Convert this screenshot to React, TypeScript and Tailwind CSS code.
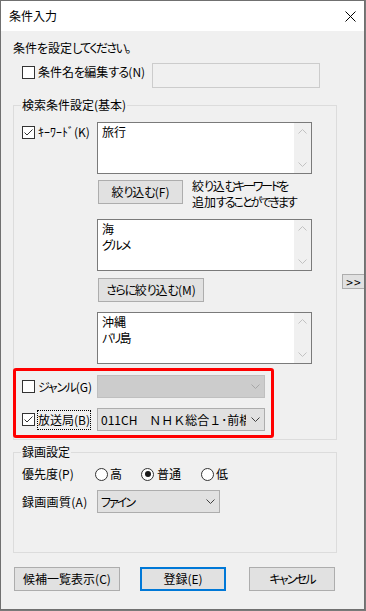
import React from "react";

const Tick = () => (
  <svg width="11" height="11" viewBox="0 0 11 11" className="block">
    <polyline points="1.5,5.5 4,8 9.5,2.5" fill="none" stroke="#333333" strokeWidth="1" />
  </svg>
);

function Checkbox({ checked }: { checked?: boolean }) {
  return (
    <span className="w-[13px] h-[13px] shrink-0 border border-[#333333] bg-white flex items-center justify-center">
      {checked ? <Tick /> : null}
    </span>
  );
}

function Radio({ checked }: { checked?: boolean }) {
  return (
    <span className="w-[13px] h-[13px] shrink-0 rounded-full border border-[#333333] bg-white flex items-center justify-center">
      {checked ? <span className="w-[6px] h-[6px] rounded-full bg-[#1a1a1a]" /> : null}
    </span>
  );
}

const ChevronDown = ({ color }: { color: string }) => (
  <svg width="9" height="5" viewBox="0 0 9 5" className="block">
    <polyline points="0.5,0.5 4.5,4.5 8.5,0.5" fill="none" stroke={color} strokeWidth="1" />
  </svg>
);

const ChevronUp = ({ color }: { color: string }) => (
  <svg width="9" height="5" viewBox="0 0 9 5" className="block">
    <polyline points="0.5,4.5 4.5,0.5 8.5,4.5" fill="none" stroke={color} strokeWidth="1" />
  </svg>
);

function ListBox({ lines }: { lines: React.ReactNode[] }) {
  return (
    <div className="w-[215px] h-[52px] shrink-0 border border-[#7a7a7a] bg-white flex">
      <div className="flex-1 pl-[4px] pt-[1px] leading-[16px] [font-feature-settings:'palt']">
        {lines.map((l, i) => (
          <div key={i}>{l}</div>
        ))}
      </div>
      <div className="w-[17px] bg-[#f0f0f0] flex flex-col justify-between">
        <div className="h-[17px] flex items-center justify-center">
          <ChevronUp color="#c2c2c2" />
        </div>
        <div className="h-[17px] flex items-center justify-center">
          <ChevronDown color="#c2c2c2" />
        </div>
      </div>
    </div>
  );
}

function Btn({ children, className }: { children: React.ReactNode; className: string }) {
  return (
    <div
      className={
        "shrink-0 bg-[#e1e1e1] flex items-center justify-center leading-[16px] whitespace-nowrap [font-feature-settings:'palt'] " +
        className
      }
    >
      {children}
    </div>
  );
}

export default function App() {
  return (
    <div className="w-[366px] h-[611px] bg-[#7a7a7a] text-[12px] text-black font-['Noto_Sans_CJK_JP','Noto_Sans',sans-serif]">
      <div className="w-[365px] h-[610px] border border-[#707070] bg-[#f0f0f0] overflow-hidden flex flex-col">
        {/* title bar */}
        <div className="h-[30px] shrink-0 bg-white flex items-center">
          <span className="ml-[8px] leading-[16px]">条件入力</span>
          <span className="ml-auto mr-[8px]">
            <svg width="11" height="11" viewBox="0 0 11 11" className="block">
              <line x1="0.5" y1="0.5" x2="10.5" y2="10.5" stroke="#000" strokeWidth="1" />
              <line x1="10.5" y1="0.5" x2="0.5" y2="10.5" stroke="#000" strokeWidth="1" />
            </svg>
          </span>
        </div>

        {/* body */}
        <div className="flex flex-col pl-[12px]">
          <div className="mt-[9px] leading-[16px] whitespace-nowrap [font-feature-settings:'palt']">
            条件を設定<span className="tracking-[-1.6px]">してください。</span>
          </div>

          <div className="mt-[7px] flex items-start h-[25px]">
            <div className="w-[139px] shrink-0 flex items-center h-[16px] mt-[1px] pl-[9px]">
              <Checkbox />
              <span className="ml-[3px] whitespace-nowrap leading-[16px] [font-feature-settings:'palt']">
                条件名<span className="tracking-[-0.8px]">を</span>編集<span className="tracking-[-0.8px]">する</span>(N)
              </span>
            </div>
            <div className="w-[168px] h-[25px] border border-[#cccccc] bg-[#f0f0f0]" />
          </div>

          {/* group 1 + >> */}
          <div className="mt-[17px] flex items-start">
            <div className="relative w-[324px] h-[335px] shrink-0 border border-[#dcdcdc] flex flex-col">
              <span className="absolute left-[7px] top-[-9px] px-[1px] bg-[#f0f0f0] leading-[16px] whitespace-nowrap [font-feature-settings:'palt']">
                検索条件設定(基本)
              </span>

              <div className="mt-[16px] flex items-start">
                <div className="w-[83px] shrink-0 pl-[8px] flex items-center h-[16px] mt-[2px]">
                  <Checkbox checked />
                  <span className="ml-[3px] whitespace-nowrap leading-[16px]">ｷｰﾜｰﾄﾞ(K)</span>
                </div>
                <ListBox lines={["旅行"]} />
              </div>

              <div className="mt-[6px] flex items-start pl-[84px]">
                <Btn className="w-[85px] h-[24px] border border-[#adadad]">
                  <span>
                    絞<span className="tracking-[-1.2px]">り</span>込<span className="tracking-[-1px]">む</span>(F)
                  </span>
                </Btn>
                <div className="ml-[9px] -mt-[2px] leading-[16px] whitespace-nowrap [font-feature-settings:'palt']">
                  <div>
                    絞<span className="tracking-[-1.2px]">り</span>込
                    <span className="tracking-[-2.2px]">むキーワードを</span>
                  </div>
                  <div>
                    追加<span className="tracking-[-2px]">することができます</span>
                  </div>
                </div>
              </div>

              <div className="mt-[9px] ml-[83px]">
                <ListBox lines={["海", <span className="tracking-[-1.6px]">グルメ</span>]} />
              </div>

              <div className="mt-[7px] ml-[84px] flex">
                <Btn className="w-[106px] h-[24px] border border-[#adadad]">
                  <span>
                    <span className="tracking-[-1.4px]">さらに</span>絞<span className="tracking-[-1.2px]">り</span>込
                    <span className="tracking-[-1px]">む</span>(M)
                  </span>
                </Btn>
              </div>

              <div className="mt-[10px] ml-[83px]">
                <ListBox
                  lines={[
                    "沖縄",
                    <span>
                      <span className="tracking-[-1.8px]">バリ</span>島
                    </span>,
                  ]}
                />
              </div>

              <div className="relative mt-[11px] flex flex-col">
                <div className="flex items-center h-[23px]">
                  <div className="w-[83px] shrink-0 pl-[8px] flex items-center">
                    <Checkbox />
                    <span className="ml-[3px] whitespace-nowrap leading-[16px] [font-feature-settings:'palt']">
                      <span className="tracking-[-1.3px]">ジャンル</span>(G)
                    </span>
                  </div>
                  <div className="w-[168px] h-[23px] shrink-0 border border-[#bfbfbf] bg-[#cccccc] flex items-center justify-end">
                    <div className="w-[18px] flex justify-center">
                      <ChevronDown color="#a6a6a6" />
                    </div>
                  </div>
                </div>
                <div className="mt-[10px] flex items-center h-[23px]">
                  <div className="w-[83px] shrink-0 pl-[8px] flex items-center">
                    <Checkbox checked />
                    <span className="ml-[2px] border border-dotted border-black leading-[18px] whitespace-nowrap">放送局(B)</span>
                  </div>
                  <div className="w-[168px] h-[23px] shrink-0 border border-[#adadad] bg-[#e1e1e1] flex items-center">
                    <div className="flex-1 overflow-hidden whitespace-nowrap pl-[3px] leading-[16px]">
                      011CH　ＮＨＫ総合１･前橋
                    </div>
                    <div className="w-[18px] shrink-0 flex justify-center">
                      <ChevronDown color="#404040" />
                    </div>
                  </div>
                </div>
                <div className="absolute left-[-1px] top-[-7px] w-[261px] h-[70px] border-[3px] border-[#ff0000] rounded-[3px] pointer-events-none" />
              </div>
            </div>

            <div className="ml-[5px] mt-[169px] w-[24px] h-[15px] shrink-0 border border-[#adadad] bg-[#e1e1e1] flex items-center justify-center leading-[13px] text-[12px] tracking-[1px]">
              &gt;&gt;
            </div>
          </div>

          {/* group 2 */}
          <div className="relative mt-[12px] w-[324px] h-[101px] border border-[#dcdcdc] flex flex-col">
            <span className="absolute left-[7px] top-[-9px] px-[1px] bg-[#f0f0f0] leading-[16px] whitespace-nowrap">録画設定</span>

            <div className="mt-[13px] flex items-center h-[16px]">
              <div className="w-[81px] shrink-0 pl-[8px] whitespace-nowrap leading-[16px]">優先度(P)</div>
              <div className="w-[46px] shrink-0 flex items-center">
                <Radio />
                <span className="ml-[2px] leading-[16px]">高</span>
              </div>
              <div className="w-[60px] shrink-0 flex items-center">
                <Radio checked />
                <span className="ml-[3px] leading-[16px]">普通</span>
              </div>
              <div className="flex items-center">
                <Radio />
                <span className="ml-[2px] leading-[16px]">低</span>
              </div>
            </div>

            <div className="mt-[8px] flex items-center h-[23px]">
              <div className="w-[83px] shrink-0 pl-[8px] whitespace-nowrap leading-[16px] tracking-[0.3px]">録画画質(A)</div>
              <div className="w-[123px] h-[23px] shrink-0 border border-[#adadad] bg-[#e1e1e1] flex items-center">
                <div className="flex-1 pl-[3px] leading-[16px] [font-feature-settings:'palt'] tracking-[-2px]">ファイン</div>
                <div className="w-[18px] shrink-0 flex justify-center">
                  <ChevronDown color="#404040" />
                </div>
              </div>
            </div>
          </div>

          {/* buttons */}
          <div className="mt-[14px] ml-[1px] flex">
            <Btn className="w-[106px] h-[24px] border border-[#adadad]">候補一覧表示(C)</Btn>
            <Btn className="ml-[20px] w-[86px] h-[24px] border-2 border-[#0078d7]">登録(E)</Btn>
            <Btn className="ml-[23px] w-[86px] h-[24px] border border-[#adadad] tracking-[-1.8px]">キャンセル</Btn>
          </div>
        </div>
      </div>
    </div>
  );
}
